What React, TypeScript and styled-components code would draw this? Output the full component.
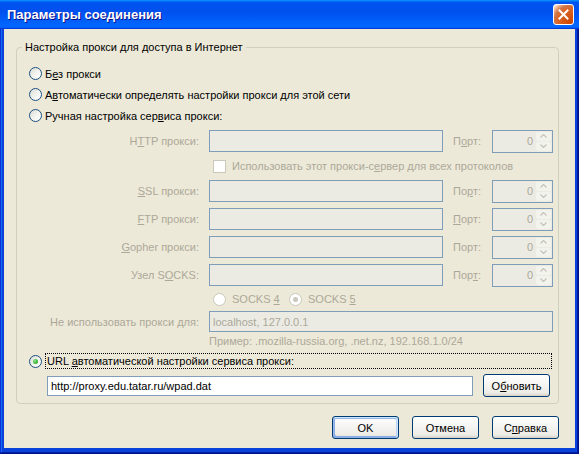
import styled, { createGlobalStyle } from "styled-components";

const GlobalStyle = createGlobalStyle`
  html, body {
    margin: 0;
    padding: 0;
    background: #ece9d8;
  }
  body {
    font-family: "Liberation Sans", "DejaVu Sans", sans-serif;
    font-size: 11px;
    color: #000;
  }
`;

const Window = styled.div`
  width: 579px;
  height: 454px;
  box-sizing: border-box;
  display: flex;
  flex-direction: column;
  background: #0842d8;
  box-shadow: inset -1px -1px #00138c, inset 1px 1px #0831d9, inset -2px -2px #001ea0, inset 2px 2px #166aee;
`;

const TitleBar = styled.div`
  height: 29px;
  flex: none;
  display: flex;
  align-items: center;
  justify-content: space-between;
  padding: 0 5px 0 7px;
  background: linear-gradient(180deg, #0997ff, #0053ee 8%, #0050ee 40%, #06f 88%, #06f 93%, #005bff 95%, #003dd7 96%, #003dd7);
`;

const Title = styled.div`
  color: #fff;
  font-weight: bold;
  font-size: 13px;
  text-shadow: 1px 1px #0f1089;
`;

const CloseButton = styled.div`
  width: 19px;
  height: 19px;
  border: 1px solid #fff;
  border-radius: 3px;
  display: flex;
  align-items: center;
  justify-content: center;
  background: radial-gradient(circle at 90% 90%, #cc4600 0%, #dc6527 55%, #cd7546 70%, #ffccb2 90%, #fff 100%);
`;

const Body = styled.div`
  flex: 1;
  margin: 0 4px 6px 4px;
  padding: 12px 16px 0 12px;
  background: #ece9d8;
  display: flex;
  flex-direction: column;
`;

const GroupBox = styled.fieldset`
  margin: 0;
  padding: 0 5px 6px 12px;
  border: 1px solid #d0d0bf;
  border-radius: 4px;
  min-width: 0;
`;

const Legend = styled.legend`
  margin-left: -7px;
  padding: 0 3px;
  line-height: 13px;
  color: #000;
`;

const Key = styled.u`
  text-decoration: underline;
  text-underline-offset: 1px;
`;

const RadioList = styled.div`
  margin-top: 9px;
  display: flex;
  flex-direction: column;
`;

const RadioRow = styled.div<{ $height?: number }>`
  height: ${(p) => p.$height ?? 21}px;
  display: flex;
  align-items: center;
  gap: 3px;
`;

const RadioCircle = styled.span<{ $checked?: boolean; $disabled?: boolean }>`
  width: 13px;
  height: 13px;
  box-sizing: border-box;
  border-radius: 50%;
  flex: none;
  display: inline-flex;
  align-items: center;
  justify-content: center;
  border: 1px solid ${(p) => (p.$disabled ? "#cac8bb" : "#1c5180")};
  background: ${(p) =>
    p.$disabled ? "#fff" : "linear-gradient(135deg, #dcdcd7 0%, #f4f4f0 55%, #fff 100%)"};

  &::after {
    content: "";
    display: ${(p) => (p.$checked ? "block" : "none")};
    width: 5px;
    height: 5px;
    border-radius: 50%;
    background: ${(p) =>
      p.$disabled ? "#cac8bb" : "radial-gradient(circle at 35% 35%, #8ee68b 0%, #4dbf4a 45%, #21a121 100%)"};
  }
`;

const ProxyGrid = styled.div`
  margin-top: 1px;
  display: grid;
  grid-template-columns: 180px 234px 49px 61px;
  grid-template-rows: 28px 22px 28px 28px 28px 28px 20px 25px 14px;
  align-items: center;
  color: #aca899;
`;

const FieldLabel = styled.div`
  text-align: right;
  padding-right: 10px;
  white-space: nowrap;
`;

const PortLabel = styled.div`
  padding-left: 10px;
`;

const TextBox = styled.div<{ $disabled?: boolean; $height?: number }>`
  height: ${(p) => p.$height ?? 22}px;
  box-sizing: border-box;
  border: 1px solid #7f9db9;
  background: ${(p) => (p.$disabled ? "#ebebe4" : "#fff")};
  color: ${(p) => (p.$disabled ? "#aca899" : "#000")};
  display: flex;
  align-items: center;
  padding: 0 3px;
  white-space: nowrap;
  overflow: hidden;
`;

const Span = styled.div`
  grid-column: 2 / 5;
`;

const SpinBox = styled.div`
  height: 23px;
  box-sizing: border-box;
  border: 1px solid #7f9db9;
  background: #ebebe4;
  display: flex;
  align-items: stretch;
`;

const SpinValue = styled.div`
  flex: 1;
  display: flex;
  align-items: center;
  justify-content: flex-end;
  padding-right: 3px;
  color: #aca899;
`;

const SpinButtons = styled.div`
  width: 15px;
  display: flex;
  flex-direction: column;
  padding: 1px 1px 1px 0;
  gap: 1px;
`;

const SpinArrow = styled.div`
  flex: 1;
  background: #f3f3ee;
  border-radius: 2px;
  display: flex;
  align-items: center;
  justify-content: center;
`;

const CheckRow = styled.div`
  grid-column: 2 / 5;
  display: flex;
  align-items: center;
  gap: 6px;
  padding-left: 4px;
`;

const CheckBox = styled.span`
  width: 13px;
  height: 13px;
  box-sizing: border-box;
  border: 1px solid #cac8bb;
  background: #fff;
  flex: none;
`;

const SocksRow = styled.div`
  grid-column: 2 / 5;
  display: flex;
  align-items: center;
  gap: 6px;
  padding-left: 4px;
`;

const SocksOption = styled.div`
  display: flex;
  align-items: center;
  gap: 6px;
  width: 70px;
`;

const Example = styled.div`
  grid-column: 2 / 5;
  line-height: 12px;
`;

const FocusLabel = styled.span`
  flex: 1;
  height: 16px;
  box-sizing: border-box;
  border: 1px dotted #000;
  display: flex;
  align-items: center;
  padding-left: 1px;
  margin-right: 1px;
`;

const UrlRow = styled.div`
  margin-top: 5px;
  display: flex;
  align-items: center;
  gap: 10px;
  padding-left: 18px;
`;

const Button = styled.div<{ $default?: boolean; $width?: number }>`
  width: ${(p) => p.$width ?? 67}px;
  height: 23px;
  box-sizing: border-box;
  border: 1px solid #003c74;
  border-radius: 3px;
  display: flex;
  align-items: center;
  justify-content: center;
  background: linear-gradient(180deg, #fff, #ecebe6 86%, #d6d0c5);
  box-shadow: ${(p) =>
    p.$default ? "inset -1px 1px #cee7ff, inset 1px 2px #98b8ea, inset -2px 2px #bcd4f6, inset 1px -1px #89ade4, inset 2px -2px #89ade4" : "none"};
  color: #000;
`;

const Footer = styled.div`
  margin-top: 12px;
  display: flex;
  justify-content: flex-end;
  gap: 13px;
`;

const Arrow = ({ up }: { up?: boolean }) => (
  <svg width="7" height="4" viewBox="0 0 7 4">
    <path d={up ? "M0.5 3.5 L3.5 0.5 L6.5 3.5" : "M0.5 0.5 L3.5 3.5 L6.5 0.5"} fill="none" stroke="#c5c3b8" strokeWidth="1.2" />
  </svg>
);

const Spin = () => (
  <SpinBox>
    <SpinValue>0</SpinValue>
    <SpinButtons>
      <SpinArrow>
        <Arrow up />
      </SpinArrow>
      <SpinArrow>
        <Arrow />
      </SpinArrow>
    </SpinButtons>
  </SpinBox>
);

type ProxyRow = { label: React.ReactNode; port: React.ReactNode };

const proxyRows: ProxyRow[] = [
  { label: <>H<Key>T</Key>TP прокси:</>, port: <>П<Key>о</Key>рт:</> },
  { label: <><Key>S</Key>SL прокси:</>, port: <>По<Key>р</Key>т:</> },
  { label: <><Key>F</Key>TP прокси:</>, port: <><Key>П</Key>орт:</> },
  { label: <><Key>G</Key>opher прокси:</>, port: <>Порт:</> },
  { label: <>Узел S<Key>O</Key>CKS:</>, port: <>Пор<Key>т</Key>:</> },
];

function ProxyLine({ row }: { row: ProxyRow }) {
  return (
    <>
      <FieldLabel>{row.label}</FieldLabel>
      <TextBox $disabled />
      <PortLabel>{row.port}</PortLabel>
      <Spin />
    </>
  );
}

export default function App() {
  return (
    <>
      <GlobalStyle />
      <Window>
        <TitleBar>
          <Title>Параметры соединения</Title>
          <CloseButton>
            <svg width="11" height="11" viewBox="0 0 11 11">
              <path d="M1.5 1.5 L9.5 9.5 M9.5 1.5 L1.5 9.5" stroke="#fff" strokeWidth="2" strokeLinecap="square" />
            </svg>
          </CloseButton>
        </TitleBar>
        <Body>
          <GroupBox>
            <Legend>Настройка прокси для доступа в Интернет</Legend>
            <RadioList>
              <RadioRow>
                <RadioCircle />
                <span>Б<Key>е</Key>з прокси</span>
              </RadioRow>
              <RadioRow>
                <RadioCircle />
                <span>А<Key>в</Key>томатически определять настройки прокси для этой сети</span>
              </RadioRow>
              <RadioRow>
                <RadioCircle />
                <span>Ручная настройка сер<Key>в</Key>иса прокси:</span>
              </RadioRow>
            </RadioList>
            <ProxyGrid>
              <ProxyLine row={proxyRows[0]} />
              <CheckRow>
                <CheckBox />
                <span>Использовать этот прокси-с<Key>е</Key>рвер для всех протоколов</span>
              </CheckRow>
              {proxyRows.slice(1).map((row, i) => (
                <ProxyLine key={i} row={row} />
              ))}
              <FieldLabel />
              <SocksRow>
                <SocksOption>
                  <RadioCircle $disabled />
                  <span>SOCKS <Key>4</Key></span>
                </SocksOption>
                <SocksOption>
                  <RadioCircle $disabled $checked />
                  <span>SOCKS <Key>5</Key></span>
                </SocksOption>
              </SocksRow>
              <FieldLabel>Не использовать прокси <Key>д</Key>ля:</FieldLabel>
              <Span>
                <TextBox $disabled $height={21}>localhost, 127.0.0.1</TextBox>
              </Span>
              <FieldLabel />
              <Example>Пример: .mozilla-russia.org, .net.nz, 192.168.1.0/24</Example>
            </ProxyGrid>
            <RadioRow $height={16} style={{ marginTop: 5 }}>
              <RadioCircle $checked />
              <FocusLabel>
                <span>URL <Key>а</Key>втоматической настройки сервиса прокси:</span>
              </FocusLabel>
            </RadioRow>
            <UrlRow>
              <TextBox $height={20} style={{ width: 426 }}>http://proxy.edu.tatar.ru/wpad.dat</TextBox>
              <Button>
                <span>О<Key>б</Key>новить</span>
              </Button>
            </UrlRow>
          </GroupBox>
          <Footer>
            <Button $default>OK</Button>
            <Button>Отмена</Button>
            <Button>
              <span>С<Key>п</Key>равка</span>
            </Button>
          </Footer>
        </Body>
      </Window>
    </>
  );
}
